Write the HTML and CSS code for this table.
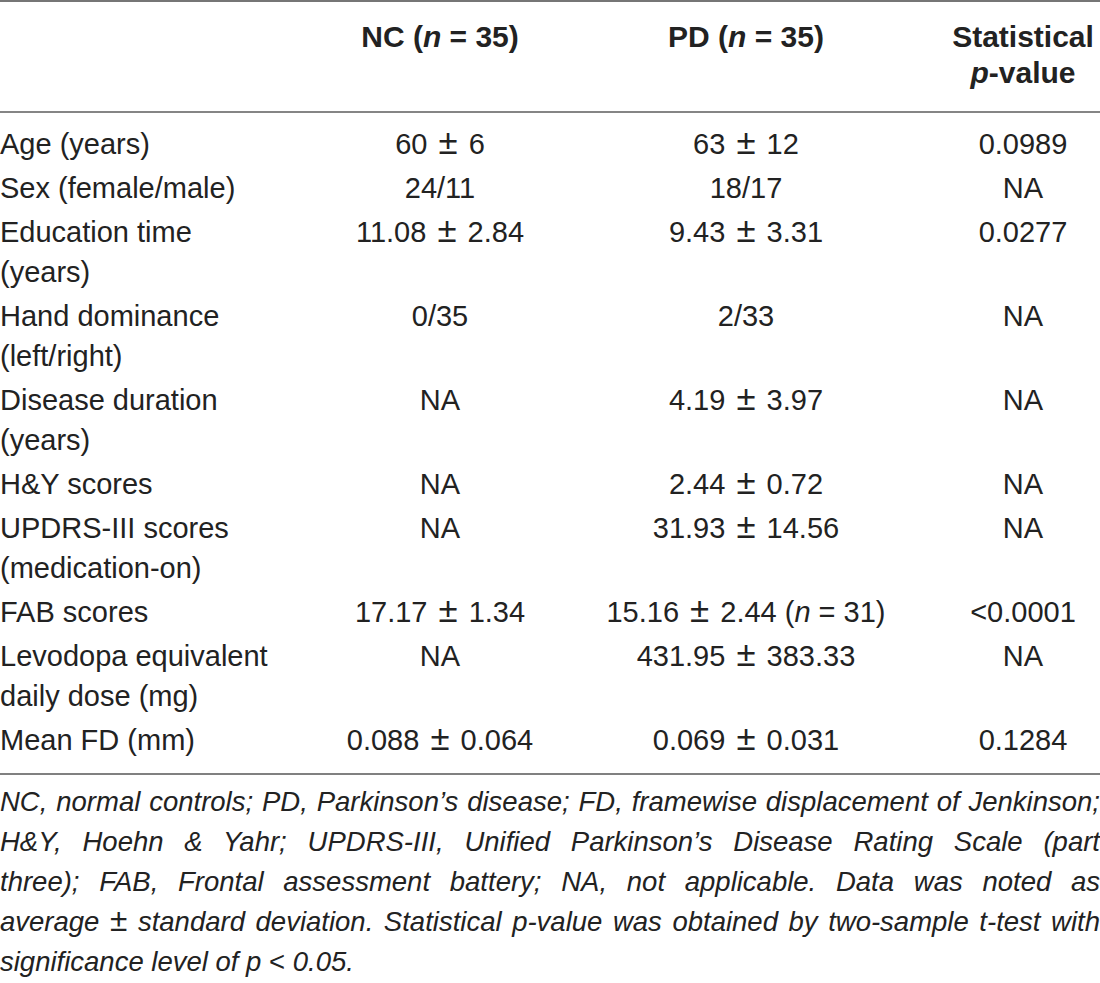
FILE: index.html
```html
<!DOCTYPE html>
<html lang="en">
<head>
<meta charset="utf-8">
<title>Demographics table</title>
<link rel="stylesheet" href="styles.css">
</head>
<body>
<div class="wrap">
  <table class="data">
    <colgroup>
      <col class="c1"><col class="c2"><col class="c3"><col class="c4">
    </colgroup>
    <thead>
      <tr>
        <th class="lab"></th>
        <th>NC (<i>n</i> = 35)</th>
        <th>PD (<i>n</i> = 35)</th>
        <th>Statistical<br><i>p</i>-value</th>
      </tr>
    </thead>
    <tbody>
      <tr class="first"><td class="lab">Age (years)</td><td>60 <span class="pm">±</span> 6</td><td>63 <span class="pm">±</span> 12</td><td>0.0989</td></tr>
      <tr><td class="lab">Sex (female/male)</td><td>24/11</td><td>18/17</td><td>NA</td></tr>
      <tr><td class="lab">Education time<br>(years)</td><td>11.08 <span class="pm">±</span> 2.84</td><td>9.43 <span class="pm">±</span> 3.31</td><td>0.0277</td></tr>
      <tr><td class="lab">Hand dominance<br>(left/right)</td><td>0/35</td><td>2/33</td><td>NA</td></tr>
      <tr><td class="lab">Disease duration<br>(years)</td><td>NA</td><td>4.19 <span class="pm">±</span> 3.97</td><td>NA</td></tr>
      <tr><td class="lab">H&amp;Y scores</td><td>NA</td><td>2.44 <span class="pm">±</span> 0.72</td><td>NA</td></tr>
      <tr><td class="lab">UPDRS-III scores<br>(medication-on)</td><td>NA</td><td>31.93 <span class="pm">±</span> 14.56</td><td>NA</td></tr>
      <tr><td class="lab">FAB scores</td><td>17.17 <span class="pm">±</span> 1.34</td><td>15.16 <span class="pm">±</span> 2.44 (<i>n</i> = 31)</td><td>&lt;0.0001</td></tr>
      <tr><td class="lab">Levodopa equivalent<br>daily dose (mg)</td><td>NA</td><td>431.95 <span class="pm">±</span> 383.33</td><td>NA</td></tr>
      <tr class="last"><td class="lab">Mean FD (mm)</td><td>0.088 <span class="pm">±</span> 0.064</td><td>0.069 <span class="pm">±</span> 0.031</td><td>0.1284</td></tr>
    </tbody>
  </table>
  <p class="note">
    <span class="ln">NC, normal controls; PD, Parkinson’s disease; FD, framewise displacement of Jenkinson;</span>
    <span class="ln">H&amp;Y, Hoehn &amp; Yahr; UPDRS-III, Unified Parkinson’s Disease Rating Scale (part</span>
    <span class="ln">three); FAB, Frontal assessment battery; NA, not applicable. Data was noted as</span>
    <span class="ln">average <span class="up pmn">±</span> standard deviation. Statistical p-value was obtained by two-sample t-test with</span>
    <span class="ln end">significance level of p <span class="up">&lt;</span> 0.05.</span>
  </p>
</div>
</body>
</html>
```
FILE: styles.css
```css
html, body {
  margin: 0;
  padding: 0;
  background: #ffffff;
}

body {
  font-family: "Liberation Sans", Arial, sans-serif;
  color: #222222;
}

.wrap {
  width: 1100px;
}

.data {
  width: 1100px;
  table-layout: fixed;
  border-collapse: collapse;
  border-top: 2px solid #767676;
  border-bottom: 2px solid #808080;
  font-size: 29px;
}

.c1 { width: 334px; }
.c2 { width: 212px; }
.c3 { width: 400px; }
.c4 { width: 154px; }

.data th {
  font-weight: bold;
  text-align: center;
  vertical-align: top;
  line-height: 36px;
  padding: 17px 0 20px;
  border-bottom: 2px solid #858585;
  white-space: nowrap;
  font-size: 30px;
}

.data td {
  text-align: center;
  vertical-align: top;
  line-height: 40px;
  padding: 2px 0;
  white-space: nowrap;
}

.data .lab {
  text-align: left;
}

.data tr.first td {
  padding-top: 11px;
}

.data tr.last td {
  padding-bottom: 13px;
}

.pm {
  font-size: 1.2em;
  line-height: 1;
  margin: 0 3px;
}

.note {
  margin: 7px 0 0;
  font-style: italic;
  font-size: 27.5px;
  line-height: 40px;
}

.ln {
  display: block;
  text-align: justify;
  text-align-last: justify;
}

.ln.end {
  text-align-last: left;
}

.up {
  font-style: normal;
}

.pmn {
  font-size: 1.15em;
  line-height: 1;
}
```
